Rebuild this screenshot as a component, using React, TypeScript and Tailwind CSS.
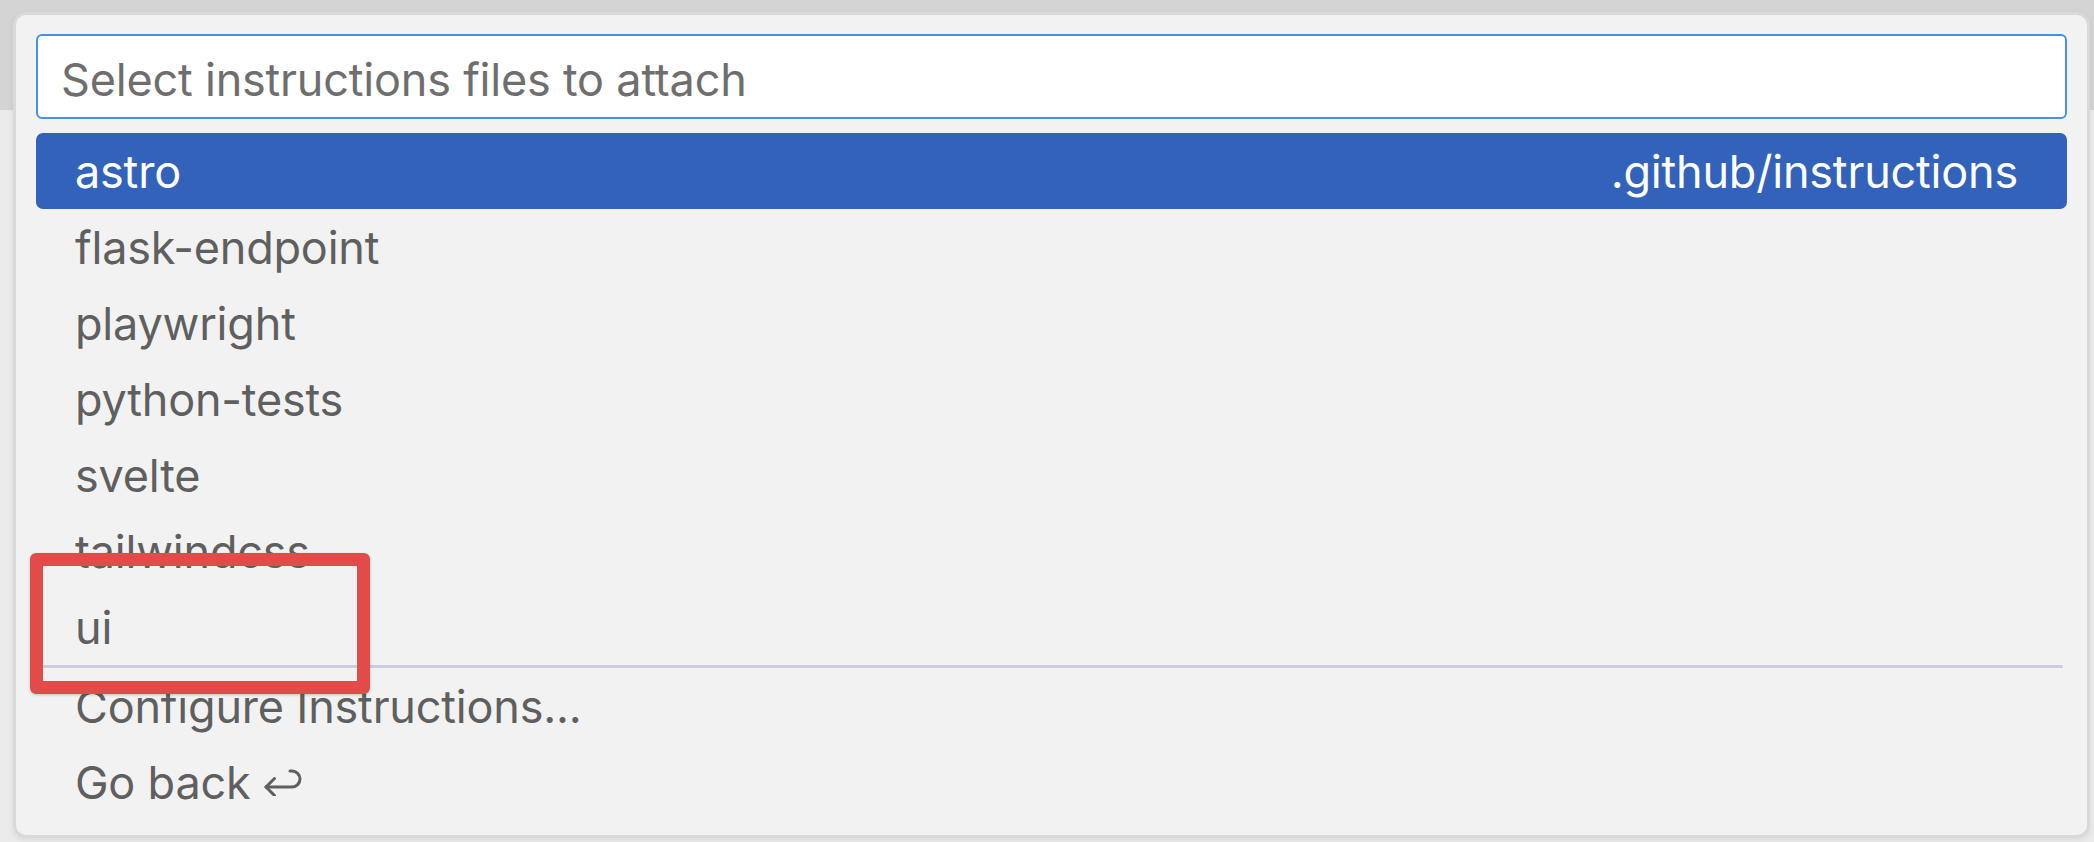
const ITEMS = [
  "flask-endpoint",
  "playwright",
  "python-tests",
  "svelte",
  "tailwindcss",
  "ui",
];

const FONT = { fontFamily: "Inter, 'Noto Sans', sans-serif" } as const;

function ReturnGlyph() {
  return (
    <svg
      width="38"
      height="28"
      viewBox="0 0 38 28"
      fill="none"
      stroke="#5f5f5f"
      strokeWidth="3"
      strokeLinecap="round"
      strokeLinejoin="round"
      className="ml-[14px] shrink-0"
    >
      <path d="M2 19 H28 A8 8 0 0 0 28 3 H26" />
      <path d="M10.5 10.5 L2 19 L10.5 27.5" />
    </svg>
  );
}

export default function App() {
  return (
    <div
      className="relative h-[842px] w-[2094px] overflow-hidden bg-[linear-gradient(to_bottom,#d4d4d4_0,#d4d4d4_110px,#ebebeb_110px)] pl-[13px] pt-[12px]"
      style={FONT}
    >
      {/* Quick pick panel */}
      <div className="flex h-[826px] w-[2077px] flex-col rounded-[13px] border-[3px] border-[#d9d9d9] bg-[#f2f2f2] px-[20px] pt-[19px] shadow-[0_2px_6px_rgba(0,0,0,0.08)]">
        <div className="flex h-[85px] items-center rounded-[6px] border-2 border-[#4b8fe5] bg-white pl-[23px] pt-[5px]">
          <span className="text-[45px] leading-none tracking-[-0.2px] text-[#6e6e6e]">
            Select instructions files to attach
          </span>
        </div>

        <div className="mt-[14px] flex flex-col">
          <div className="flex h-[76px] items-center justify-between rounded-[7px] bg-[#3362bb] pl-[39px] pr-[49px] text-[45px] leading-none tracking-[-0.2px] text-white">
            <span>astro</span>
            <span>.github/instructions</span>
          </div>
          {ITEMS.map((name) => (
            <div
              key={name}
              className="flex h-[76px] items-center pl-[39px] text-[45px] leading-none tracking-[-0.2px] text-[#5f5f5f]"
            >
              {name}
            </div>
          ))}
          <div className="mr-[4px] h-[3px] rounded-full bg-[#cecbdc]" />
          <div className="flex h-[76px] items-center pl-[39px] text-[45px] leading-none tracking-[-0.2px] text-[#5f5f5f]">
            Configure Instructions...
          </div>
          <div className="flex h-[76px] items-center pl-[39px] text-[45px] leading-none tracking-[-0.2px] text-[#5f5f5f]">
            <span>Go back</span>
            <ReturnGlyph />
          </div>
        </div>
      </div>

      {/* Annotation box drawn over the list */}
      <div className="pointer-events-none absolute left-[30px] top-[553px] h-[141px] w-[340px] rounded-[6px] border-[13px] border-[#e34a4a] shadow-[0_1px_3px_rgba(0,0,0,0.2)]" />
    </div>
  );
}
